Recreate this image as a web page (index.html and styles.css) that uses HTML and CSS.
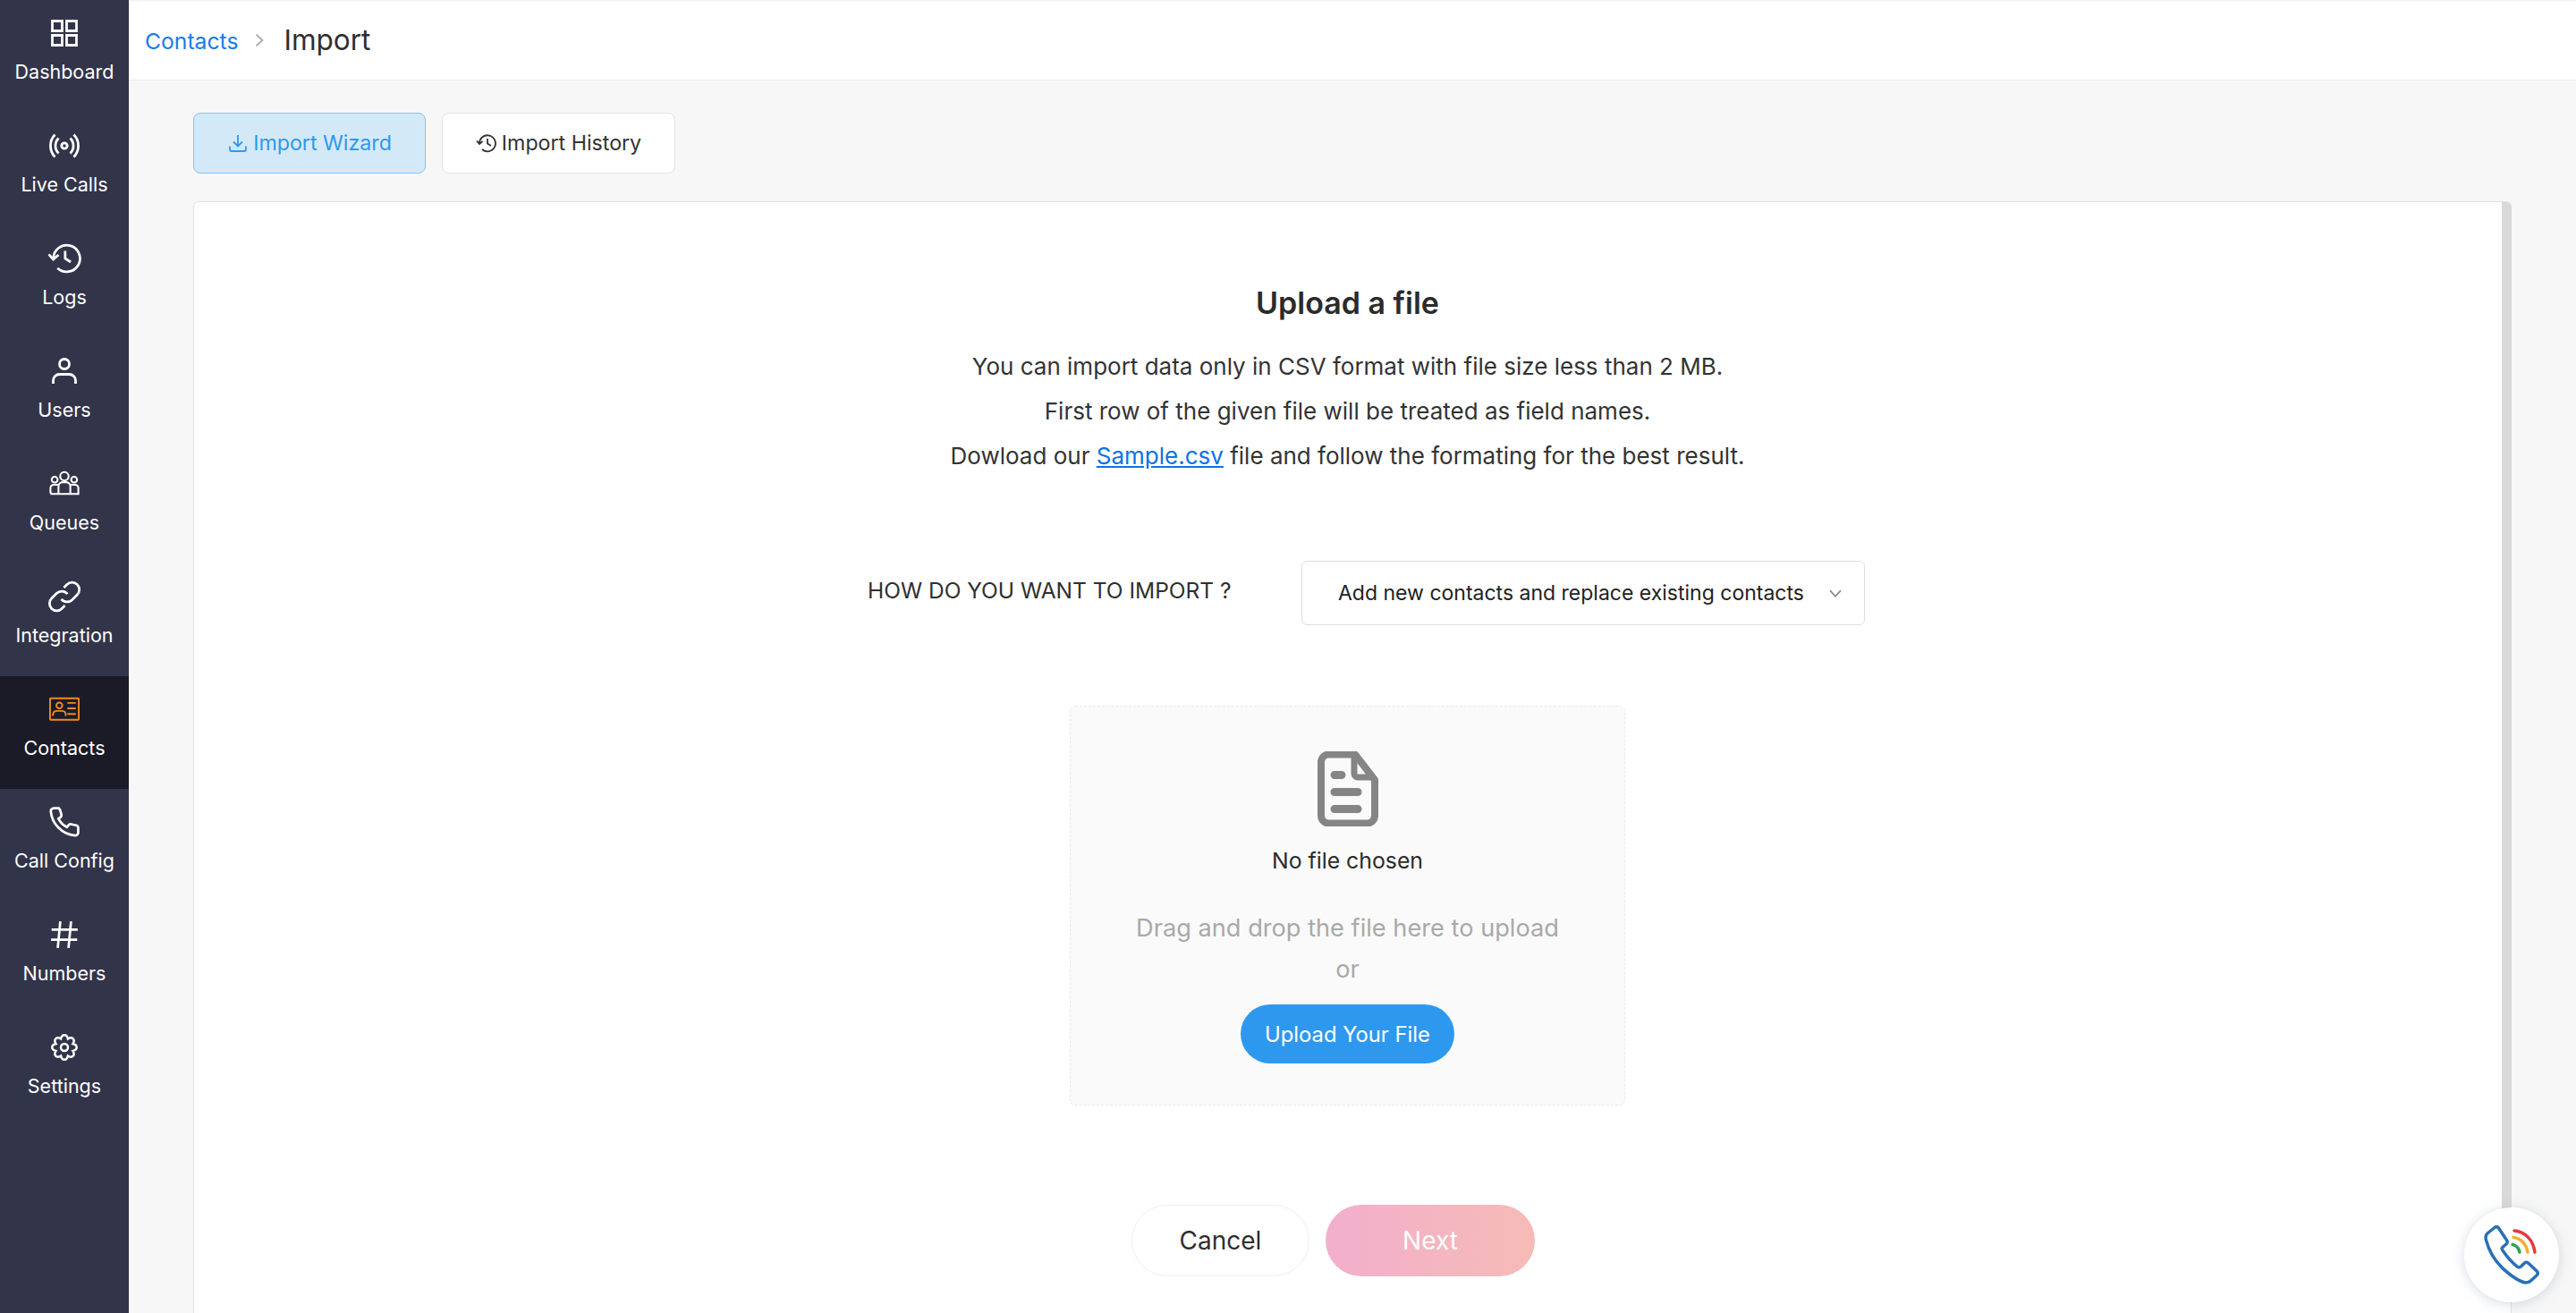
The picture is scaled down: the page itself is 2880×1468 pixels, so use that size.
FILE: index.html
```html
<!DOCTYPE html>
<html lang="en">
<head>
  <meta charset="UTF-8" />
  <title>Import Contacts</title>
  <link rel="stylesheet" href="styles.css">
</head>
<body>
  <div class="app">
    <!-- sidebar -->
    <nav class="sidebar">
      <a class="nav-item">
        <svg class="nav-icon" viewBox="0 0 32 32"><path d="M2.500 2.500h11v11h-11zM18.500 2.500h11v11h-11zM2.500 18.500h11v11h-11zM18.500 18.500h11v11h-11z"/></svg>
        <span>Dashboard</span>
      </a>
      <a class="nav-item">
        <svg class="nav-icon" viewBox="0 0 32 32"><circle cx="16" cy="16" r="3.200"/><path d="M9.500 7.500a12 12 0 0 0 0 17M22.500 7.500a12 12 0 0 1 0 17M5.500 3.500a18 18 0 0 0 0 25M26.500 3.500a18 18 0 0 1 0 25"/></svg>
        <span>Live Calls</span>
      </a>
      <a class="nav-item">
        <svg class="nav-icon nav-icon-lg" viewBox="2.250 2.500 28 28"><path d="M5.500 16.500a13 13 0 1 1 4 9.400M1 12.500l4.300 5 5.200-4.500"/><path d="M17 9v7.500l5.500 3.500"/></svg>
        <span>Logs</span>
      </a>
      <a class="nav-item">
        <svg class="nav-icon" viewBox="0 0 32 32"><circle cx="16" cy="8" r="5.500"/><path d="M3.500 30v-3.500a7 7 0 0 1 7-7h11a7 7 0 0 1 7 7V30"/></svg>
        <span>Users</span>
      </a>
      <a class="nav-item">
        <svg class="nav-icon nav-icon-thin" viewBox="0 0 36 32"><circle cx="18" cy="7" r="5"/><circle cx="6.500" cy="11" r="3.500"/><circle cx="29.500" cy="11" r="3.500"/><path d="M11 28V19a5 5 0 0 1 5-5h4a5 5 0 0 1 5 5v9M1.500 28h33v-7a4 4 0 0 0-4-4H25M11 17H5.500a4 4 0 0 0-4 4v4.500a2.500 2.500 0 0 0 2.500 2.500"/></svg>
        <span>Queues</span>
      </a>
      <a class="nav-item">
        <svg class="nav-icon nav-icon-lg" viewBox="2 2 28 28"><path d="M13 18.500a7 7 0 0 0 10.500.7l5-5a7 7 0 0 0-10-10l-3 3"/><path d="M19 13.500a7 7 0 0 0-10.500-.7l-5 5a7 7 0 0 0 10 10l3-3"/></svg>
        <span>Integration</span>
      </a>
      <a class="nav-item active">
        <svg class="nav-icon" viewBox="0 0 36 28"><rect x="1" y="1" width="34" height="25.500" rx="1"/><circle cx="12" cy="9.500" r="3.500"/><path d="M4.500 22v-2a4 4 0 0 1 4-4h7a4 4 0 0 1 4 4v2M21.500 6.500h10M21.500 13h10M21.500 19.500h10"/></svg>
        <span>Contacts</span>
      </a>
      <a class="nav-item">
        <svg class="nav-icon nav-icon-lg" viewBox="2 2 28 28"><path d="M10.500 2.500H5.700a3 3 0 0 0-3 3.300c1.300 12.400 11.100 22.200 23.500 23.500a3 3 0 0 0 3.300-3v-4.500a2.500 2.500 0 0 0-2-2.500l-5-1.100a2.500 2.500 0 0 0-2.500.9l-1.600 2c-3.500-1.800-6.400-4.700-8.200-8.200l2-1.600a2.500 2.500 0 0 0 .9-2.500L11.700 4z"/></svg>
        <span>Call Config</span>
      </a>
      <a class="nav-item">
        <svg class="nav-icon nav-icon-lg" viewBox="2 2 28 28"><path d="M12 3 9.500 29M22.500 3 20 29M3.500 11h25.500M3 21h25.500"/></svg>
        <span>Numbers</span>
      </a>
      <a class="nav-item">
        <svg class="nav-icon" viewBox="-2 -2 36 36"><circle cx="16" cy="16" r="4.500"/><path d="M11.600 5.400C13-1 19-1 20.400 5.400 25.900 1.860 30.140 6.100 26.600 11.600 33 13 33 19 26.600 20.400 30.140 25.900 25.900 30.140 20.400 26.600 19 33 13 33 11.600 26.600 6.100 30.140 1.860 25.900 5.400 20.400-1 19-1 13 5.400 11.600 1.860 6.100 6.100 1.860 11.600 5.400z"/></svg>
        <span>Settings</span>
      </a>
    </nav>

    <div class="main">
      <header class="topbar">
        <a class="crumb-link">Contacts</a>
        <svg class="crumb-sep" viewBox="0 0 10 14"><path d="M2 1.500 8 7l-6 5.500"/></svg>
        <span class="crumb-current">Import</span>
      </header>

      <div class="content">
        <div class="tabs">
          <button class="tab tab-active">
            <svg class="tab-icon" viewBox="0 0 24 24"><path d="M3 15.500V19a2 2 0 0 0 2 2h14a2 2 0 0 0 2-2v-3.500M12 3v12.500M7 10.500l5 5 5-5"/></svg>
            Import Wizard
          </button>
          <button class="tab">
            <svg class="tab-icon" viewBox="0 0 24 24"><path d="M4 12.500a9 9 0 1 1 3 6.500M1 9.500l3 3.500 3.500-3"/><path d="M13 7v5.500l4 2.500"/></svg>
            Import History
          </button>
        </div>

        <section class="card">
          <h2 class="card-title">Upload a file</h2>
          <p class="card-line">You can import data only in CSV format with file size less than 2 MB.</p>
          <p class="card-line">First row of the given file will be treated as field names.</p>
          <p class="card-line">Dowload our <a class="sample-link">Sample.csv</a> file and follow the formating for the best result.</p>

          <div class="import-row">
            <label class="import-label">HOW DO YOU WANT TO IMPORT ?</label>
            <div class="select-box">
              <span>Add new contacts and replace existing contacts</span>
              <svg class="select-caret" viewBox="0 0 14 10"><path d="M1.500 2 7 8l5.500-6"/></svg>
            </div>
          </div>

          <div class="dropzone">
            <svg class="file-icon" viewBox="0 0 68 84"><path class="file-body" d="M12 3.500h30L64 32v40a8.500 8.500 0 0 1-8.500 8.500h-43A8.500 8.500 0 0 1 4 72V12a8.500 8.500 0 0 1 8.500-8.500z"/><path class="file-fold" d="M41 4v21a4 4 0 0 0 4 4h18"/><path class="file-lines" d="M19 30.500h8M19 49.500h26M19 68.500h26" transform="translate(0 -4)"/></svg>
            <p class="file-name">No file chosen</p>
            <p class="drop-hint">Drag and drop the file here to upload</p>
            <p class="drop-or">or</p>
            <button class="upload-btn">Upload Your File</button>
          </div>

          <div class="actions">
            <button class="btn-cancel">Cancel</button>
            <button class="btn-next">Next</button>
          </div>
          <div class="card-scroll"></div>
        </section>
      </div>
    </div>
  </div>

  <!-- floating call button -->
  <div class="call-widget">
    <svg viewBox="0 0 60 66">
      <path class="call-phone" d="M11 2.500 3.500 8.500c-2.500 2-3 4.500-2 8C5 30 14 44 27 54c5 4 11 8.500 18 10 3 .5 5-.5 7-2.500l6-5.500c1.500-1.500 1.500-3.500 0-5l-9-8.500c-1.500-1.500-3.500-1.500-5 0l-3.500 3.500c-1.500 1.300-3 1.300-4.500 0-6-5-12-12-16-18-1-1.500-1-3 .5-4l3.500-3c1.500-1.500 1.500-3 .5-4.500L15.500 3c-1.300-1.500-3-1.700-4.500-.5z"/>
      <path class="call-green" d="M31 21.500c4 .8 7 4 8 8.500"/>
      <path class="call-amber" d="M32 13.500c9 1 14.500 8 16 16.500"/>
      <path class="call-red" d="M33 6c12 1 21 10 23 24"/>
    </svg>
  </div>
</body>
</html>
```

FILE: styles.css
```css
* {
  box-sizing: border-box;
}
html, body {
  height: 100%;
  margin: 0;
  overflow: hidden;
}
body {
  font-family: Inter, "Liberation Sans", sans-serif;
  color: #2f2f2f;
  background: #f7f7f7;
}
p {
  margin: 0;
}
button {
  font-family: inherit;
  cursor: pointer;
}
.app {
  display: flex;
  height: 100%;
}

/* sidebar */
.sidebar {
  flex: 0 0 144px;
  background: #32344a;
  display: flex;
  flex-direction: column;
}
.nav-item {
  height: 126px;
  flex: none;
  display: flex;
  flex-direction: column;
  align-items: center;
  padding-top: 21px;
  color: #fff;
  font-size: 21.500px;
  line-height: 26px;
}
.nav-item span {
  margin-top: 14px;
}
.nav-icon {
  width: 34px;
  height: 32px;
  fill: none;
  stroke: #fff;
  stroke-width: 2.800;
  overflow: visible;
}
.nav-icon-lg {
  stroke-width: 2.400;
}
.nav-icon-thin {
  stroke-width: 2.200;
}
.nav-item.active {
  background: #1a1b27;
}
.nav-item.active .nav-icon {
  stroke: #f08c1e;
  stroke-width: 2;
}

/* top bar */
.main {
  flex: 1;
  min-width: 0;
  display: flex;
  flex-direction: column;
}
.topbar {
  height: 90px;
  flex: none;
  background: #fff;
  border-bottom: 1px solid #eee;
  box-shadow: inset 0 3px 3px -2px #eee;
  display: flex;
  align-items: center;
  padding-left: 18px;
}
.crumb-link {
  color: #1a7be8;
  font-size: 24.700px;
  position: relative;
  top: 1px;
}
.crumb-sep {
  width: 12px;
  height: 16px;
  margin: 0 21px 0 18px;
  fill: none;
  stroke: #aaa;
  stroke-width: 1.600;
}
.crumb-current {
  font-size: 31.500px;
}

/* tabs */
.content {
  flex: 1;
  min-height: 0;
  padding: 36px 72px 0;
  display: flex;
  flex-direction: column;
}
.tabs {
  display: flex;
  gap: 18px;
  margin-bottom: 31px;
}
.tab {
  height: 68px;
  width: 261px;
  background: #fff;
  border: 1px solid #e4e4e4;
  border-radius: 8px;
  color: #333;
  font-size: 23.200px;
  display: flex;
  align-items: center;
  justify-content: center;
  gap: 5px;
  padding: 0;
}
.tab-icon {
  width: 24px;
  height: 24px;
  fill: none;
  stroke: currentColor;
  stroke-width: 1.800;
}
.tab-active {
  width: 260px;
  background: #d4e9f7;
  border-color: #85c3f3;
  color: #2e98ef;
}

/* card */
.card {
  flex: 1;
  width: 2592px;
  position: relative;
  background: #fff;
  border: 1px solid #e0e0e0;
  border-bottom: none;
  border-radius: 6px 6px 0 0;
  padding: 91px 11px 0 0;
  display: flex;
  flex-direction: column;
  align-items: center;
}
.card-scroll {
  position: absolute;
  top: 0;
  right: -1px;
  width: 11px;
  height: 1160px;
  background: #d9d9d9;
  border-top-right-radius: 6px;
}
.card-title {
  margin: 0 0 24px;
  font-size: 34px;
  line-height: 44px;
  font-weight: 600;
  color: #2b2b2b;
}
.card-line {
  font-size: 26px;
  line-height: 50px;
  color: #333;
}
.sample-link {
  color: #0a73e6;
  text-decoration: underline;
}
.import-row {
  display: flex;
  align-items: center;
  margin-top: 92px;
  margin-left: 42px;
}
.import-label {
  font-size: 24.500px;
  width: 485px;
  position: relative;
  top: -3px;
}
.select-box {
  width: 630px;
  height: 72px;
  border: 1px solid #dfdfdf;
  border-radius: 6px;
  padding: 0 24px 0 40px;
  display: flex;
  align-items: center;
  justify-content: space-between;
  font-size: 23px;
  color: #222;
}
.select-caret {
  width: 16px;
  height: 11px;
  fill: none;
  stroke: #888;
  stroke-width: 1.600;
}

/* drop zone */
.dropzone {
  width: 621px;
  height: 447px;
  margin-top: 90px;
  background: #fafafa;
  border: 1px dashed #eaeaea;
  border-radius: 6px;
  padding-top: 50px;
  display: flex;
  flex-direction: column;
  align-items: center;
}
.file-icon {
  width: 68px;
  height: 84px;
}
.file-body {
  fill: none;
  stroke: #858585;
  stroke-width: 8;
  stroke-linejoin: round;
}
.file-fold {
  fill: none;
  stroke: #858585;
  stroke-width: 7;
}
.file-lines {
  fill: none;
  stroke: #858585;
  stroke-width: 9;
  stroke-linecap: round;
}
.file-name {
  font-size: 24.800px;
  line-height: 32px;
  margin-top: 22px;
  color: #2b2b2b;
}
.drop-hint {
  font-size: 27.200px;
  line-height: 40px;
  margin-top: 40px;
  color: #a9a9a9;
}
.drop-or {
  font-size: 27.200px;
  line-height: 40px;
  margin-top: 6px;
  color: #a9a9a9;
}
.upload-btn {
  width: 239px;
  height: 66px;
  margin-top: 19px;
  border: none;
  border-radius: 33px;
  background: #2e98ef;
  color: #fff;
  font-size: 23.800px;
}

/* bottom buttons */
.actions {
  display: flex;
  gap: 18px;
  margin-top: 111px;
  margin-right: 32px;
}
.btn-cancel,
.btn-next {
  height: 80px;
  border-radius: 40px;
  font-size: 28px;
}
.btn-cancel {
  width: 199px;
  background: #fff;
  border: 1px solid #eee;
  color: #2f2f2f;
}
.btn-next {
  width: 234px;
  border: none;
  background: linear-gradient(90deg, #f2afcd, #f6bbb6);
  color: #fff;
}

/* floating call button */
.call-widget {
  position: absolute;
  left: 2755px;
  top: 1350px;
  width: 106px;
  height: 106px;
  border-radius: 50%;
  background: #fff;
  box-shadow: 0 2px 14px rgba(120, 140, 170, 0.3);
  display: flex;
  align-items: center;
  justify-content: center;
}
.call-widget svg {
  width: 60px;
  height: 66px;
  fill: none;
  stroke-linecap: round;
  stroke-linejoin: round;
  stroke-width: 3.500;
  overflow: visible;
}
.call-phone { stroke: #2a70b8; }
.call-green { stroke: #2ea552; }
.call-amber { stroke: #f4ae2e; }
.call-red { stroke: #e5393f; }
```
